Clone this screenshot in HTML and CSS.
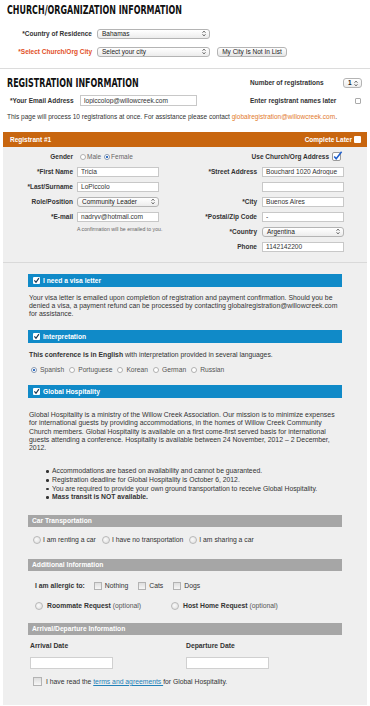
FILE: index.html
```html
<!DOCTYPE html>
<html lang="en">
<head>
    <meta charset="UTF-8">
    <title>Registration</title>
    <meta name="viewport" content="width=device-width, initial-scale=1.0">
    <link rel="stylesheet" href="styles.css">
</head>
<body>
    <div class="church-info">
        <h2 class="section-title"><span>CHURCH/ORGANIZATION INFORMATION</span></h2>
        <div class="org-row first">
            <div class="org-label">*Country of Residence</div>
            <div class="select org-select"><span>Bahamas</span><svg class="arrows" width="4" height="7" viewBox="0 0 4 7"><path d="M0.5 2.8 L2 1 L3.5 2.8 M0.5 4.2 L2 6 L3.5 4.2" fill="none" stroke="#555" stroke-width="0.8"/></svg></div>
        </div>
        <div class="org-row">
            <div class="org-label required">*Select Church/Org City</div>
            <div class="select org-select"><span>Select your city</span><svg class="arrows" width="4" height="7" viewBox="0 0 4 7"><path d="M0.5 2.8 L2 1 L3.5 2.8 M0.5 4.2 L2 6 L3.5 4.2" fill="none" stroke="#555" stroke-width="0.8"/></svg></div>
            <a href="#" class="button">My City Is Not In List</a>
        </div>
    </div>

    <hr class="divider">

    <div class="reg-info">
        <div class="reg-grid">
            <h2 class="section-title"><span>REGISTRATION INFORMATION</span></h2>
            <div class="reg-option">
                <span>Number of registrations</span>
                <div class="select count-select"><span>1</span><svg class="arrows" width="4" height="7" viewBox="0 0 4 7"><path d="M0.5 2.8 L2 1 L3.5 2.8 M0.5 4.2 L2 6 L3.5 4.2" fill="none" stroke="#555" stroke-width="0.8"/></svg></div>
            </div>
            <div class="email-row">
                <span class="email-label">*Your Email Address</span>
                <input class="text-input email-input" type="text" value="lopiccolop@willowcreek.com">
            </div>
            <div class="reg-option">
                <span>Enter registrant names later</span>
                <span class="mini-box"></span>
            </div>
        </div>
        <p class="info-line">This page will process 10 registrations at once. For assistance please contact <a href="#" class="orange-link">globalregistration@willowcreek.com</a>.</p>
    </div>

    <!-- Registrant -->
    <div class="registrant">
        <div class="registrant-header">
            <span>Registrant #1</span>
            <span class="complete-later">Complete Later <span class="white-box"></span></span>
        </div>
        <div class="registrant-body">
            <div class="reg-col reg-col-left">
                <div class="field-label">Gender</div>
                <div class="gender">
                    <span class="radio"></span><span>Male</span>
                    <span class="radio checked"></span><span>Female</span>
                </div>

                <div class="field-label">*First Name</div>
                <input class="text-input" type="text" value="Tricia">

                <div class="field-label">*Last/Surname</div>
                <input class="text-input" type="text" value="LoPiccolo">

                <div class="field-label">Role/Position</div>
                <div class="select"><span>Community Leader</span><svg class="arrows" width="4" height="7" viewBox="0 0 4 7"><path d="M0.5 2.8 L2 1 L3.5 2.8 M0.5 4.2 L2 6 L3.5 4.2" fill="none" stroke="#555" stroke-width="0.8"/></svg></div>

                <div class="field-label">*E-mail</div>
                <input class="text-input" type="text" value="nadryv@hotmail.com">

                <div class="field-note">A confirmation will be emailed to you.</div>
            </div>

            <div class="reg-col reg-col-right">
                <div class="use-address">
                    <span>Use Church/Org Address</span>
                    <svg class="blue-check" width="11" height="10" viewBox="0 0 11 10"><rect x="0.5" y="1.5" width="8" height="8" rx="1.5" fill="#fff" stroke="#9a9a9a"/><path d="M2.2 5.4 L4.2 7.8 L9.6 0.8" fill="none" stroke="#1f5fcc" stroke-width="1.5"/></svg>
                </div>

                <div class="field-label">*Street Address</div>
                <input class="text-input" type="text" value="Bouchard 1020 Adrogue">

                <div class="field-label"></div>
                <input class="text-input" type="text" value="">

                <div class="field-label">*City</div>
                <input class="text-input" type="text" value="Buenos Aires">

                <div class="field-label">*Postal/Zip Code</div>
                <input class="text-input" type="text" value="-">

                <div class="field-label">*Country</div>
                <div class="select"><span>Argentina</span><svg class="arrows" width="4" height="7" viewBox="0 0 4 7"><path d="M0.5 2.8 L2 1 L3.5 2.8 M0.5 4.2 L2 6 L3.5 4.2" fill="none" stroke="#555" stroke-width="0.8"/></svg></div>

                <div class="field-label">Phone</div>
                <input class="text-input" type="text" value="1142142200">
            </div>
        </div>
    </div>

    <!-- Extras -->
    <div class="extras">
        <div class="bar blue-bar first-bar">
            <svg class="bar-check" width="7" height="7" viewBox="0 0 7 7"><rect width="7" height="7" rx="1" fill="#fff"/><path d="M1.4 3.4 L3 5.3 L5.9 1.2" fill="none" stroke="#1b3550" stroke-width="1.2"/></svg>
            I need a visa letter
        </div>
        <p class="visa-text">Your visa letter is emailed upon completion of registration and payment confirmation. Should you be denied a visa, a payment refund can be processed by contacting globalregistration@willowcreek.com for assistance.</p>

        <div class="bar blue-bar interp-bar">
            <svg class="bar-check" width="7" height="7" viewBox="0 0 7 7"><rect width="7" height="7" rx="1" fill="#fff"/><path d="M1.4 3.4 L3 5.3 L5.9 1.2" fill="none" stroke="#1b3550" stroke-width="1.2"/></svg>
            Interpretation
        </div>
        <p class="interp-text"><b>This conference is in English</b> with interpretation provided in several languages.</p>
        <div class="lang-row">
            <span class="radio checked"></span><span>Spanish</span>
            <span class="radio"></span><span>Portuguese</span>
            <span class="radio"></span><span>Korean</span>
            <span class="radio"></span><span>German</span>
            <span class="radio"></span><span>Russian</span>
        </div>

        <div class="bar blue-bar hosp-bar">
            <svg class="bar-check" width="7" height="7" viewBox="0 0 7 7"><rect width="7" height="7" rx="1" fill="#fff"/><path d="M1.4 3.4 L3 5.3 L5.9 1.2" fill="none" stroke="#1b3550" stroke-width="1.2"/></svg>
            Global Hospitality
        </div>
        <p class="hosp-text">Global Hospitality is a ministry of the Willow Creek Association. Our mission is to minimize expenses for international guests by providing accommodations, in the homes of Willow Creek Community Church members. Global Hospitality is available on a first come-first served basis for international guests attending a conference. Hospitality is available between 24 November, 2012 &ndash; 2 December, 2012.</p>
        <ul class="hosp-list">
            <li>Accommodations are based on availability and cannot be guaranteed.</li>
            <li>Registration deadline for Global Hospitality is October 6, 2012.</li>
            <li>You are required to provide your own ground transportation to receive Global Hospitality.</li>
            <li><b>Mass transit is NOT available.</b></li>
        </ul>

        <div class="bar gray-bar car-bar">Car Transportation</div>
        <div class="car-row">
            <span class="big-radio"></span><span>I am renting a car</span>
            <span class="big-radio"></span><span>I have no transportation</span>
            <span class="big-radio"></span><span>I am sharing a car</span>
        </div>

        <div class="bar gray-bar add-bar">Additional Information</div>
        <div class="allergy-row">
            <b class="allergy-label">I am allergic to:</b>
            <span class="big-box"></span><span>Nothing</span>
            <span class="big-box"></span><span>Cats</span>
            <span class="big-box"></span><span>Dogs</span>
        </div>
        <div class="request-row">
            <div class="request"><span class="big-radio"></span><span><b>Roommate Request</b> (optional)</span></div>
            <div class="request"><span class="big-radio"></span><span><b>Host Home Request</b> (optional)</span></div>
        </div>

        <div class="bar gray-bar arrival-bar">Arrival/Departure Information</div>
        <div class="dates">
            <div class="date-group">
                <div class="date-label">Arrival Date</div>
                <input class="date-input" type="text" value="">
            </div>
            <div class="date-group">
                <div class="date-label">Departure Date</div>
                <input class="date-input" type="text" value="">
            </div>
        </div>
        <div class="terms-row">
            <span class="big-box terms-box"></span>
            <span>I have read the <a href="#" class="terms-link">terms and agreements </a>for Global Hospitality.</span>
        </div>
    </div>
</body>
</html>
```

FILE: styles.css
```css
body {
    margin: 0;
    background-color: #fff;
    font-family: "Liberation Sans", Arial, sans-serif;
    font-size: 6.5px;
    line-height: 8px;
    color: #333;
}

.section-title {
    margin: 0;
    font-family: "DejaVu Sans Condensed", "Liberation Sans", sans-serif;
    font-weight: bold;
    font-size: 11.5px;
    line-height: 14px;
    color: #111;
    white-space: nowrap;
}

/* squeeze the heading to the narrow display face of the original */
.section-title span {
    display: inline-block;
    transform: scaleX(0.77);
    transform-origin: left center;
}

/* Church section */
.church-info {
    padding: 3px 7px 0;
}

.org-row {
    display: flex;
    align-items: center;
    height: 11px;
    margin-top: 7px;
}

.org-row.first {
    margin-top: 11px;
}

.org-label {
    width: 85px;
    margin-right: 5px;
    text-align: right;
    font-weight: bold;
    color: #333;
    white-space: nowrap;
}

.org-label.required {
    color: #e2501f;
}

.select {
    box-sizing: border-box;
    display: flex;
    align-items: center;
    justify-content: space-between;
    height: 10px;
    padding: 0 3px 0 4px;
    border: 1px solid #b4b4b4;
    border-radius: 3px;
    background: linear-gradient(#fff, #ececec);
    color: #222;
    white-space: nowrap;
}

.org-select {
    width: 113px;
}

.button {
    box-sizing: border-box;
    display: block;
    width: 70px;
    height: 10px;
    margin-left: 7px;
    border: 1px solid #b4b4b4;
    border-radius: 3px;
    background: linear-gradient(#fff, #e6e6e6);
    color: #222;
    text-align: center;
    line-height: 8px;
    text-decoration: none;
    white-space: nowrap;
}

.divider {
    margin: 11px 0 0;
    border: 0;
    border-top: 1px solid #dcdcdc;
}

/* Registration section */
.reg-info {
    padding: 7px 8px 0 7px;
}

.reg-grid {
    display: grid;
    grid-template-columns: 243px 1fr;
    grid-template-rows: 14px 11px;
    row-gap: 5px;
    align-items: center;
}

.reg-option {
    display: flex;
    align-items: center;
    justify-content: space-between;
    font-weight: bold;
    color: #333;
    white-space: nowrap;
}

.count-select {
    width: 19px;
}

.mini-box {
    box-sizing: border-box;
    width: 6px;
    height: 6px;
    margin-right: 1px;
    border: 1px solid #aaa;
    border-radius: 1px;
    background: #fff;
}

.email-row {
    display: flex;
    align-items: center;
    padding-left: 3px;
}

.email-label {
    width: 63px;
    margin-right: 7px;
    font-weight: bold;
    white-space: nowrap;
}

.text-input {
    box-sizing: border-box;
    width: 82px;
    height: 10px;
    margin: 0;
    padding: 0 3px;
    border: 1px solid #c8c8c8;
    background: #fff;
    font-family: "Liberation Sans", Arial, sans-serif;
    font-size: 6.6px;
    color: #333;
    outline: none;
}

.email-input {
    width: 117px;
    height: 11px;
}

.info-line {
    margin: 7px 0 0;
    white-space: nowrap;
}

.orange-link {
    color: #e27a2c;
    text-decoration: none;
}

/* Registrant panel */
.registrant {
    margin: 11px 3px 0;
}

.registrant-header {
    display: flex;
    align-items: center;
    justify-content: space-between;
    height: 15px;
    padding: 0 6px 0 7px;
    background-color: #c8660f;
    color: #fff;
    font-weight: bold;
}

.complete-later {
    display: flex;
    align-items: center;
    gap: 2px;
}

.white-box {
    width: 7px;
    height: 7px;
    border-radius: 1px;
    background: #fff;
}

.registrant-body {
    display: flex;
    padding: 2px 0 8px;
    background-color: #efefef;
    border-bottom: 1px solid #d9d9d9;
}

.reg-col {
    display: grid;
    grid-auto-rows: 15px;
    align-items: center;
}

.reg-col-left {
    width: 185px;
    grid-template-columns: 70px 82px;
    column-gap: 4px;
}

.reg-col-right {
    grid-template-columns: 69px 82px;
    column-gap: 5px;
}

.field-label {
    text-align: right;
    font-weight: bold;
    color: #333;
    white-space: nowrap;
}

.gender {
    display: flex;
    align-items: center;
    color: #666;
    white-space: nowrap;
}

.gender .radio {
    margin: 0 1px 0 3px;
}

.field-note {
    grid-column: 2;
    align-self: start;
    padding-top: 2px;
    font-size: 5.2px;
    line-height: 6px;
    color: #666;
    white-space: nowrap;
}

.use-address {
    grid-column: 1 / 3;
    display: flex;
    align-items: center;
    justify-content: flex-end;
    padding-right: 1px;
    font-weight: bold;
    gap: 3px;
}

.blue-check {
    margin-top: -2px;
}

.radio {
    box-sizing: border-box;
    display: inline-block;
    width: 6px;
    height: 6px;
    border: 1px solid #b0b0b0;
    border-radius: 50%;
    background: #fff;
}

.radio.checked {
    background: radial-gradient(circle, #2a64b8 0, #3a78cc 40%, #fff 50%);
    border-color: #8a9ab0;
}

/* Extras panel */
.extras {
    margin: 0 3px;
    padding: 11px 25px 18px;
    background-color: #efefef;
    font-size: 6.9px;
}

.bar {
    display: flex;
    align-items: center;
    gap: 3px;
    height: 13px;
    padding-left: 5px;
    color: #fff;
    font-weight: bold;
    font-size: 6.7px;
}

.blue-bar {
    background-color: #108ac8;
}

.gray-bar {
    height: 12px;
    padding-left: 4px;
    background-color: #a6a6a6;
}

.visa-text {
    margin: 7px 0 0;
    padding-left: 1px;
}

.interp-bar {
    margin-top: 12px;
}

.interp-text {
    margin: 8px 0 0;
    padding-left: 1px;
    font-size: 6.8px;
}

.lang-row {
    display: flex;
    align-items: center;
    margin-top: 7px;
    padding-left: 3px;
    color: #555;
    font-size: 6.7px;
}

.lang-row .radio {
    margin: 0 3px 0 5px;
}

.lang-row .radio:first-child {
    margin-left: 0;
}

.hosp-bar {
    margin-top: 11px;
}

.hosp-text {
    margin: 13px 0 0;
    padding-left: 1px;
    line-height: 8.3px;
}

.hosp-list {
    margin: 15px 0 0;
    padding-left: 24px;
    font-size: 6.8px;
    line-height: 8.6px;
    list-style: none;
}

.hosp-list li {
    position: relative;
}

.hosp-list li::before {
    content: "";
    position: absolute;
    left: -6px;
    top: 3px;
    width: 2.5px;
    height: 2.5px;
    border-radius: 50%;
    background: #333;
}

.car-bar {
    margin-top: 13px;
}

.car-row {
    display: flex;
    align-items: center;
    height: 10px;
    margin-top: 8px;
    padding-left: 5px;
    font-size: 6.8px;
}

.big-radio {
    box-sizing: border-box;
    display: inline-block;
    width: 8px;
    height: 8px;
    border: 1px solid #b8b8b8;
    border-radius: 50%;
    background: radial-gradient(circle at 40% 40%, #fafafa, #dcdcdc);
}

.car-row .big-radio {
    margin: 0 2px 0 6px;
}

.car-row .big-radio:first-child {
    margin-left: 0;
}

.add-bar {
    margin-top: 14px;
}

.allergy-row {
    display: flex;
    align-items: center;
    height: 10px;
    margin-top: 10px;
    padding-left: 7px;
    font-size: 6.8px;
}

.allergy-label {
    margin-right: 9px;
}

.big-box {
    box-sizing: border-box;
    display: inline-block;
    width: 8px;
    height: 8px;
    margin-right: 3px;
    border: 1px solid #b3b3b3;
    background: linear-gradient(#dedede, #f6f6f6);
}

.allergy-row .big-box + span {
    margin-right: 10px;
}

.request-row {
    display: flex;
    align-items: center;
    height: 10px;
    margin-top: 10px;
    padding-left: 7px;
    font-size: 6.8px;
}

.request {
    display: flex;
    align-items: center;
    gap: 4px;
    width: 136px;
}

.request b {
    color: #333;
}

.request span:last-child {
    color: #555;
}

.arrival-bar {
    margin-top: 12px;
}

.dates {
    display: flex;
    margin-top: 7px;
    padding-left: 2px;
}

.date-group {
    width: 159px;
}

.date-label {
    font-weight: bold;
    font-size: 6.8px;
}

.date-input {
    box-sizing: border-box;
    display: block;
    width: 83px;
    height: 12px;
    margin: 7px 0 0;
    border: 1px solid #d0d0d0;
    background: #fff;
    outline: none;
}

.terms-row {
    display: flex;
    align-items: center;
    height: 10px;
    margin-top: 8px;
    padding-left: 5px;
    font-size: 6.8px;
}

.terms-box {
    width: 9px;
    height: 9px;
    margin-right: 4px;
}

.terms-link {
    color: #2281b8;
}
```
